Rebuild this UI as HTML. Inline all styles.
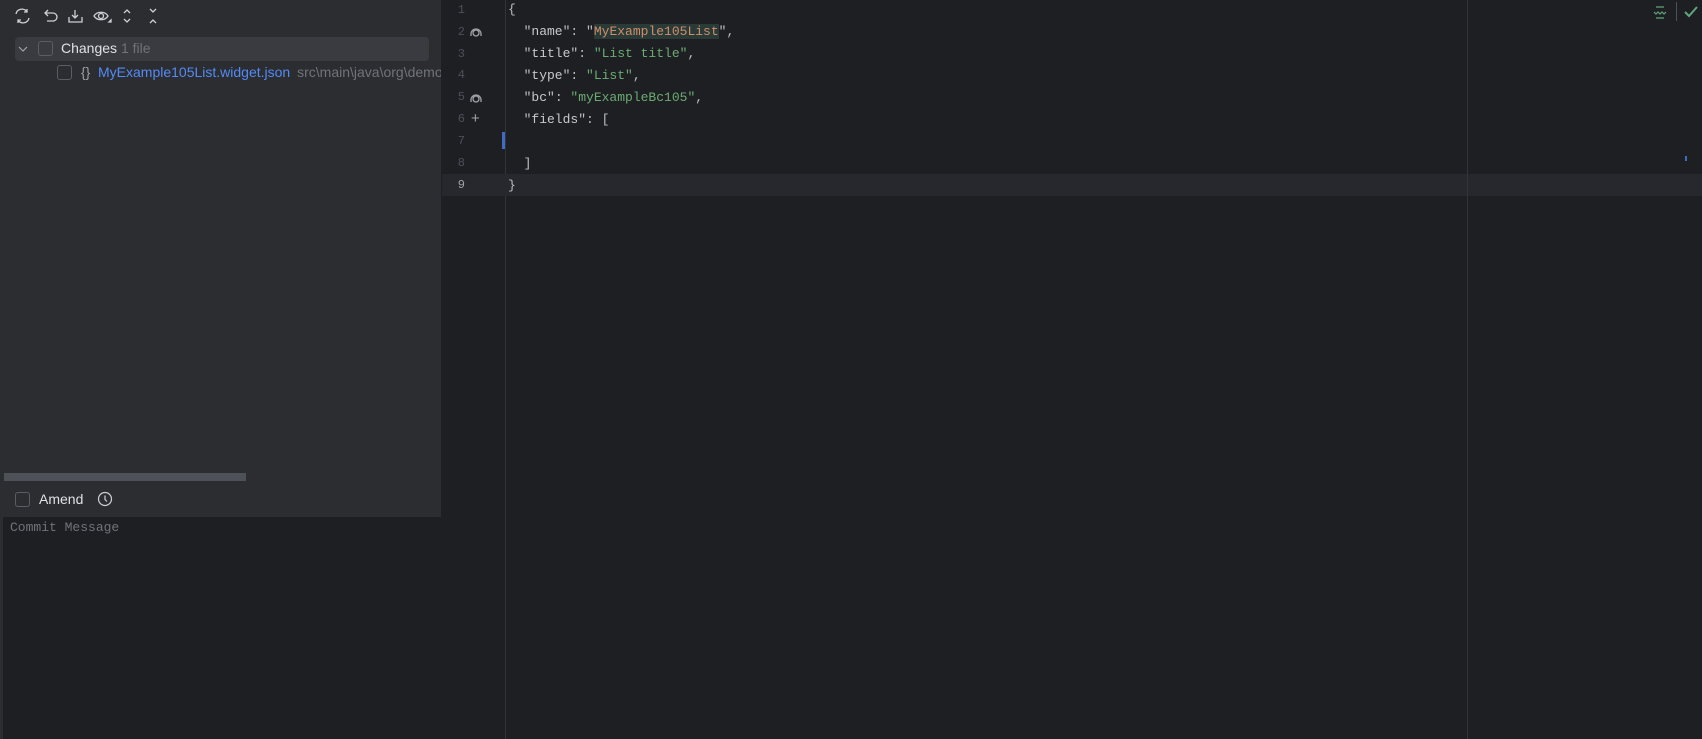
<!DOCTYPE html><html><head><style>
body{margin:0;width:1702px;height:739px;background:#1e1f22;position:relative;overflow:hidden;font-family:"Liberation Sans",sans-serif}
.a{position:absolute}
.m{font-family:"Liberation Mono",monospace;font-size:13px;white-space:pre}
.cb{position:absolute;width:15px;height:15px;border:1px solid #5a5d63;border-radius:3px;box-sizing:border-box}
.ln{position:absolute;left:445px;width:20px;text-align:right;color:#4b5059;font-family:"Liberation Mono",monospace;font-size:12px}
.k{color:#c7c9cd}.s{color:#6aab73}.p{color:#bcbec4}
</style></head><body>
<div class="a" style="left:0;top:0;width:441px;height:739px;background:#2b2d30"></div>
<div class="a" style="left:441px;top:0;width:1px;height:739px;background:#1e1f22"></div>
<svg class="a" style="left:12px;top:5px" width="160" height="22" fill="none" stroke="#ced0d6" stroke-width="1.3">
<path d="M4 9a6 6 0 0 1 11-2M17 13a6 6 0 0 1-11 2M15 4v3h-3M6 18v-3h3"/>
<path d="M33 8h8a4 4 0 0 1 0 8h-6M36 5l-3 3 3 3"/>
<path d="M63 5v8M60 10l3 3 3-3M57 12v5h13v-5"/>
<path d="M82 11c3-5 11-5 14 0c-3 5-11 5-14 0z"/><circle cx="89" cy="11" r="2.5"/>
<path d="M97 17l2-2v2z" fill="#ced0d6"/>
<path d="M112 8l3-3 3 3M112 14l3 3 3-3"/>
<path d="M138 4l3 3 3-3M138 18l3-3 3 3"/>
</svg>
<div class="a" style="left:15px;top:37px;width:414px;height:24px;background:#393b40;border-radius:4px"></div>
<svg class="a" style="left:17px;top:43px" width="12" height="12" fill="none" stroke="#a0a3a8" stroke-width="1.2"><path d="M2 4l4 4 4-4"/></svg>
<div class="cb" style="left:38px;top:41px"></div>
<div class="a" style="left:61px;top:40px;font-size:14px;color:#dfe1e5">Changes <span style="color:#6f737a">1 file</span></div>
<div class="cb" style="left:57px;top:65px"></div>
<div class="a" style="left:81px;top:64px;font-size:14px;color:#9aa0a8">{}</div>
<div class="a" style="left:98px;top:64px;width:343px;overflow:hidden;font-size:14px;color:#548af7;white-space:nowrap">MyExample105List.widget.json <span style="color:#6f737a;margin-left:3px">src\main\java\org\demo</span></div>
<div class="a" style="left:4px;top:473px;width:242px;height:8px;background:#4e5157"></div>
<div class="cb" style="left:15px;top:492px"></div>
<div class="a" style="left:39px;top:491px;font-size:14px;color:#dfe1e5">Amend</div>
<svg class="a" style="left:97px;top:491px" width="16" height="16" fill="none" stroke="#ced0d6" stroke-width="1.2"><circle cx="8" cy="8" r="6.5"/><path d="M8 4.5v4l2 2"/></svg>
<div class="a" style="left:3px;top:517px;width:438px;height:222px;background:#1e1f22"></div>
<div class="a m" style="left:10px;top:520px;color:#6f737a">Commit Message</div>
<div class="a" style="left:505px;top:0;width:1px;height:739px;background:#313438"></div>
<div class="a" style="left:442px;top:174px;width:1260px;height:22px;background:#26282e"></div>
<div class="a" style="left:1467px;top:0;width:1px;height:739px;background:#313438"></div>
<div class="a" style="left:502px;top:132px;width:3px;height:17px;background:#3d6bc6"></div>
<div class="ln" style="top:3px">1</div><div class="ln" style="top:25px">2</div><div class="ln" style="top:47px">3</div><div class="ln" style="top:68px">4</div><div class="ln" style="top:90px">5</div><div class="ln" style="top:112px">6</div><div class="ln" style="top:134px">7</div><div class="ln" style="top:156px">8</div><div class="ln" style="top:178px;color:#a1a3ab">9</div>
<svg class="a" style="left:469px;top:24px" width="14" height="14" fill="none" stroke="#a0a3a8" stroke-width="1.3"><path d="M2 10a5 5 0 0 1 10 0"/><circle cx="7" cy="9" r="3"/><path d="M2 10v2M12 10v2"/></svg>
<svg class="a" style="left:469px;top:90px" width="14" height="14" fill="none" stroke="#a0a3a8" stroke-width="1.3"><path d="M2 10a5 5 0 0 1 10 0"/><circle cx="7" cy="9" r="3"/><path d="M2 10v2M12 10v2"/></svg>
<div class="a" style="left:471px;top:110px;color:#a0a3a8;font-size:15px">+</div>
<div class="a m p" style="left:508px;top:2px">{</div>
<div class="a m" style="left:508px;top:24px"><span class="p">  "</span><span class="k">name</span><span class="p">": "</span><span style="color:#ce8e6d;background:#2a3a37">MyExample105List</span><span class="p">",</span></div>
<div class="a m" style="left:508px;top:46px"><span class="p">  "</span><span class="k">title</span><span class="p">": </span><span class="s">"List title"</span><span class="p">,</span></div>
<div class="a m" style="left:508px;top:68px"><span class="p">  "</span><span class="k">type</span><span class="p">": </span><span class="s">"List"</span><span class="p">,</span></div>
<div class="a m" style="left:508px;top:90px"><span class="p">  "</span><span class="k">bc</span><span class="p">": </span><span class="s">"myExampleBc105"</span><span class="p">,</span></div>
<div class="a m" style="left:508px;top:112px"><span class="p">  "</span><span class="k">fields</span><span class="p">": [</span></div>
<div class="a m p" style="left:508px;top:156px">  ]</div>
<div class="a m p" style="left:508px;top:178px">}</div>
<svg class="a" style="left:1652px;top:4px" width="16" height="16" fill="none" stroke="#5fa67a" stroke-width="1.2"><path d="M4 3h8M4 14h8M2 8l2 2 2-2 2 2 2-2 2 2 2-2"/></svg>
<div class="a" style="left:1676px;top:2px;width:1px;height:19px;background:#4e5157"></div>
<svg class="a" style="left:1683px;top:5px" width="16" height="14" fill="none" stroke="#5fa67a" stroke-width="2"><path d="M2 7l4 4 8-9"/></svg>
<div class="a" style="left:1685px;top:156px;width:2px;height:5px;background:#3d6bc6"></div>
</body></html>
